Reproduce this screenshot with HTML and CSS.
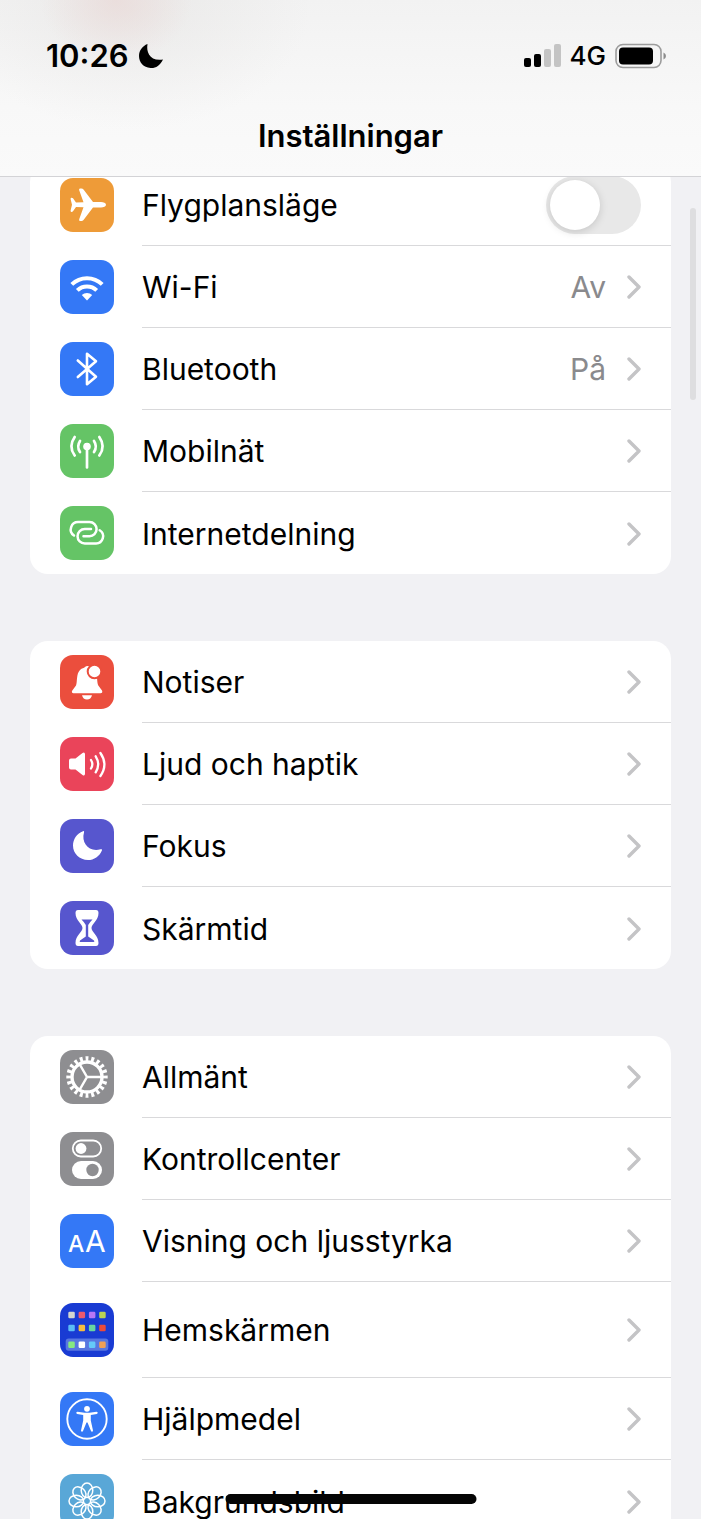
FILE: index.html
```
<!DOCTYPE html>
<html lang="sv">
<head>
<meta charset="utf-8">
<meta name="viewport" content="width=device-width, initial-scale=1">
<title>Inställningar</title>
<link rel="stylesheet" href="styles.css">
</head>
<body>
<svg class="defs" width="0" height="0" aria-hidden="true">
  <symbol id="chevron" viewBox="0 0 14 24"><path d="M2 2l10 10L2 22" fill="none" stroke="currentColor" stroke-width="3.400" stroke-linecap="round" stroke-linejoin="round"/></symbol>
</svg>
<div class="screen">
  <header class="header">
    <div class="status">
      <div class="status-side">
        <span class="time">10:26</span>
        <svg class="status-moon" viewBox="0 0 26 26" aria-hidden="true"><path d="M9.500 1C8 9.500 12 18.500 25 16.500C22 23 17 25.500 12.500 25C5.500 24.500 1 19.500 1 13C1 7.500 4.500 3 9.500 1Z"/></svg>
      </div>
      <div class="status-side">
        <svg class="signal" viewBox="0 0 37 24" aria-hidden="true"><rect y="14" width="7" height="9" rx="2"/><rect x="10" y="10" width="7" height="13" rx="2"/><g fill="#c4c4c4"><rect x="20" y="5" width="7" height="18" rx="2"/><rect x="30" width="7" height="23" rx="2"/></g></svg>
        <span class="network">4G</span>
        <svg class="battery" viewBox="0 0 52 26" aria-hidden="true"><rect x="1" y="1.500" width="45" height="23" rx="7" fill="none" stroke="#9c9c9c" stroke-width="1.600"/><rect x="4" y="4.500" width="34" height="17" rx="4"/><path d="M48.500 9.500q2.500 1 2.500 3.500t-2.500 3.500z" fill="#8c8c8c"/></svg>
      </div>
    </div>
    <h1 class="title">Inställningar</h1>
  </header>

  <main class="content">
    <ul class="group">
      <li class="row">
        <svg class="icon orange" viewBox="0 0 54 54" aria-hidden="true"><path fill="#fff" d="M46 26.800C46 25 43.500 24 41 24H33L23.500 11.500Q22.700 10.500 21.500 10.500H20Q18.700 10.800 19.200 12.300L23.500 24.200L16 24.500L13 20.300Q12.300 19.500 11.300 19.700Q10.500 19.900 10.600 21L12 26.800L10.600 32.500Q10.500 33.600 11.300 33.900Q12.300 34 13 33.200L16 29L23.500 29.300L19.200 41.200Q18.700 42.800 20 43H21.500Q22.700 43 23.500 42L33 29.500H41C43.500 29.500 46 28.500 46 26.800Z"/></svg>
        <label class="row-body"><span class="label">Flygplansläge</span><input class="toggle" type="checkbox" role="switch"></label>
      </li>
      <li class="row">
        <svg class="icon blue" viewBox="0 0 54 54" aria-hidden="true"><g fill="none" stroke="#fff" stroke-width="4"><path d="M11.800 24.400a21.800 21.800 0 0 1 30.400 0M17.300 30.400a14 14 0 0 1 19.400 0"/></g><path fill="#fff" d="M21.800 35a7.600 7.600 0 0 1 10.400 0L27 40.400z"/></svg>
        <a class="row-body" href="#wifi"><span class="label">Wi-Fi</span><span class="value">Av</span><svg class="chevron" aria-hidden="true"><use href="#chevron"/></svg></a>
      </li>
      <li class="row">
        <svg class="icon blue" viewBox="0 0 54 54" aria-hidden="true"><path d="M17.800 18.500L36 34.700L27 42.200V11.800L36 19.200L17.800 35" fill="none" stroke="#fff" stroke-width="2.600" stroke-linecap="round" stroke-linejoin="round"/></svg>
        <a class="row-body" href="#bluetooth"><span class="label">Bluetooth</span><span class="value">På</span><svg class="chevron" aria-hidden="true"><use href="#chevron"/></svg></a>
      </li>
      <li class="row">
        <svg class="icon green" viewBox="0 0 54 54" aria-hidden="true"><circle cx="27" cy="22.500" r="3.800" fill="#fff"/><path d="M27 23V43.500M20 17q-3.600 5.500 0 11M34 17q3.600 5.500 0 11M14.700 13q-6.700 9.500 0 18.500M39.300 13q6.700 9.500 0 18.500" fill="none" stroke="#fff" stroke-width="2.700" stroke-linecap="round"/></svg>
        <a class="row-body" href="#mobilnat"><span class="label">Mobilnät</span><svg class="chevron" aria-hidden="true"><use href="#chevron"/></svg></a>
      </li>
      <li class="row">
        <svg class="icon green" viewBox="0 0 54 54" aria-hidden="true"><path d="M14 29.500A7.400 7.400 0 0 1 18.500 16H29.500A7.100 7.100 0 0 1 29.500 30.200H23.500M31 23H24.800A7.200 7.200 0 0 0 24.800 37.500H35.500A7.200 7.200 0 0 0 39.700 24.200" fill="none" stroke="#fff" stroke-width="2.500" stroke-linecap="round"/></svg>
        <a class="row-body" href="#internetdelning"><span class="label">Internetdelning</span><svg class="chevron" aria-hidden="true"><use href="#chevron"/></svg></a>
      </li>
    </ul>

    <ul class="group">
      <li class="row">
        <svg class="icon red" viewBox="0 0 54 54" aria-hidden="true"><path fill="#fff" d="M13.500 38.300Q11 37.800 12.300 35.500L16 30.500C17.500 27 16 19 20 15C22 13 24 13.300 25 12Q26.500 10.500 29 11.200L36 17C37.500 20 36.800 28 38.300 30.500L42 35.500Q43 38 40.500 38.300ZM22 40.300H32Q31 44.500 27 44.500T22 40.300Z"/><circle cx="34.500" cy="16.500" r="6.800" fill="#fff" stroke="#eb4e3d" stroke-width="2"/></svg>
        <a class="row-body" href="#notiser"><span class="label">Notiser</span><svg class="chevron" aria-hidden="true"><use href="#chevron"/></svg></a>
      </li>
      <li class="row">
        <svg class="icon pink" viewBox="0 0 54 54" aria-hidden="true"><path fill="#fff" d="M11 21.500H15.500L22.500 16Q25 14.600 25 17.500V36.500Q25 39.500 22.500 38L15.500 32.500H11Q9 32.500 9 30.500V23.500Q9 21.500 11 21.500Z"/><path d="M31 23q2.700 4.200 0 8.500M35.700 19.300q5 8 0 16M40.400 16q8 11.500 0 23" fill="none" stroke="#fff" stroke-width="2.300" stroke-linecap="round"/></svg>
        <a class="row-body" href="#ljud"><span class="label">Ljud och haptik</span><svg class="chevron" aria-hidden="true"><use href="#chevron"/></svg></a>
      </li>
      <li class="row">
        <svg class="icon purple" viewBox="0 0 54 54" aria-hidden="true"><path fill="#fff" d="M23 12.200Q24.500 11.800 24 13.500C21 24 29 33.500 40.500 30.300Q42.500 29.800 42 31.200C39.500 37.500 34 41 28 41C19.500 41 13 34.500 13 26.500C13 20 17 14.500 23 12.200Z"/></svg>
        <a class="row-body" href="#fokus"><span class="label">Fokus</span><svg class="chevron" aria-hidden="true"><use href="#chevron"/></svg></a>
      </li>
      <li class="row">
        <svg class="icon purple" viewBox="0 0 54 54" aria-hidden="true"><path fill="#fff" d="M18 9H36Q38.500 9 38.500 12C38.500 20 31.500 22.500 31.500 27S38.500 34 38.500 42Q38.500 45 36 45H18Q15.500 45 15.500 42C15.500 34 22.500 31.500 22.500 27S15.500 20 15.500 12Q15.500 9 18 9Z"/><path fill="#5756ce" d="M21.500 18.500H32.500Q29.500 21.500 28.200 24V35.500L34 39.500Q35 41 33.500 41H20.500Q19 41 20 39.500L25.800 35.500V24Q24.500 21.500 21.500 18.500Z"/></svg>
        <a class="row-body" href="#skarmtid"><span class="label">Skärmtid</span><svg class="chevron" aria-hidden="true"><use href="#chevron"/></svg></a>
      </li>
    </ul>

    <ul class="group">
      <li class="row">
        <svg class="icon gray" viewBox="0 0 54 54" aria-hidden="true"><g fill="none" stroke="#fff"><circle cx="27" cy="27" r="15" stroke-width="3.400"/><circle cx="27" cy="27" r="18.200" stroke-width="5" pathLength="200" stroke-dasharray="5 5" stroke-dashoffset="2.500"/><path d="M27 27H42M27 27L19.500 14M27 27L19.500 40" stroke-width="2.500"/></g></svg>
        <a class="row-body" href="#allmant"><span class="label">Allmänt</span><svg class="chevron" aria-hidden="true"><use href="#chevron"/></svg></a>
      </li>
      <li class="row">
        <svg class="icon gray" viewBox="0 0 54 54" aria-hidden="true"><rect x="12.800" y="8.500" width="28.400" height="16" rx="8" fill="none" stroke="#fff" stroke-width="1.800"/><circle cx="21" cy="16.500" r="5.400" fill="#fff"/><rect x="12" y="29" width="30" height="18" rx="9" fill="#fff"/><circle cx="32.500" cy="38" r="6.200" fill="#8e8e91"/></svg>
        <a class="row-body" href="#kontrollcenter"><span class="label">Kontrollcenter</span><svg class="chevron" aria-hidden="true"><use href="#chevron"/></svg></a>
      </li>
      <li class="row">
        <svg class="icon blue" viewBox="0 0 54 54" aria-hidden="true"><text class="icon-a-small" x="8" y="38">A</text><text class="icon-a-large" x="25" y="38">A</text></svg>
        <a class="row-body" href="#visning"><span class="label">Visning och ljusstyrka</span><svg class="chevron" aria-hidden="true"><use href="#chevron"/></svg></a>
      </li>
      <li class="row row-tall">
        <svg class="icon navy" viewBox="0 0 54 54" aria-hidden="true"><rect x="5.700" y="35.500" width="42.600" height="12.300" rx="3" fill="#5877e0"/><g><rect x="8.300" y="8.700" width="6.500" height="6.500" rx="1.300" fill="#d4d6cf"/><rect x="18.600" y="8.700" width="6.500" height="6.500" rx="1.300" fill="#ef5a6d"/><rect x="28.900" y="8.700" width="6.500" height="6.500" rx="1.300" fill="#b877f5"/><rect x="39.200" y="8.700" width="6.500" height="6.500" rx="1.300" fill="#b9d255"/><rect x="8.300" y="21.700" width="6.500" height="6.500" rx="1.300" fill="#5bbcf5"/><rect x="18.600" y="21.700" width="6.500" height="6.500" rx="1.300" fill="#f5bd41"/><rect x="28.900" y="21.700" width="6.500" height="6.500" rx="1.300" fill="#68d5a0"/><rect x="39.200" y="21.700" width="6.500" height="6.500" rx="1.300" fill="#eb4b3a"/><rect x="8.300" y="38.500" width="6.500" height="6.500" rx="1.300" fill="#86ea80"/><rect x="18.600" y="38.500" width="6.500" height="6.500" rx="1.300" fill="#fff"/><rect x="28.900" y="38.500" width="6.500" height="6.500" rx="1.300" fill="#65caf9"/><rect x="39.200" y="38.500" width="6.500" height="6.500" rx="1.300" fill="#f0a056"/></g></svg>
        <a class="row-body" href="#hemskarmen"><span class="label">Hemskärmen</span><svg class="chevron" aria-hidden="true"><use href="#chevron"/></svg></a>
      </li>
      <li class="row">
        <svg class="icon blue" viewBox="0 0 54 54" aria-hidden="true"><circle cx="27" cy="27" r="19.700" fill="none" stroke="#fff" stroke-width="1.900"/><circle cx="27" cy="16.800" r="2.900" fill="#fff"/><path fill="#fff" d="M17.500 19.700L24.500 20.800H29.500L36.500 19.700Q37.700 19.700 37.700 20.800T36.800 22L30.800 23V28.500L33 38.500Q33 39.600 32.200 39.800T31 39.100L27.500 30.500H26.500L23 39.100Q22.500 40 21.800 39.800T21 38.500L23.200 28.500V23L17.200 22Q16.300 21.800 16.300 20.800T17.500 19.700Z"/></svg>
        <a class="row-body" href="#hjalpmedel"><span class="label">Hjälpmedel</span><svg class="chevron" aria-hidden="true"><use href="#chevron"/></svg></a>
      </li>
      <li class="row">
        <svg class="icon sky" viewBox="0 0 54 54" aria-hidden="true"><g fill="none" stroke="#fff" stroke-width="1.500"><ellipse cx="27" cy="16.300" rx="5.800" ry="7.300"/><ellipse cx="27" cy="16.300" rx="5.800" ry="7.300" transform="rotate(45 27 27)"/><ellipse cx="27" cy="16.300" rx="5.800" ry="7.300" transform="rotate(90 27 27)"/><ellipse cx="27" cy="16.300" rx="5.800" ry="7.300" transform="rotate(135 27 27)"/><ellipse cx="27" cy="16.300" rx="5.800" ry="7.300" transform="rotate(180 27 27)"/><ellipse cx="27" cy="16.300" rx="5.800" ry="7.300" transform="rotate(225 27 27)"/><ellipse cx="27" cy="16.300" rx="5.800" ry="7.300" transform="rotate(270 27 27)"/><ellipse cx="27" cy="16.300" rx="5.800" ry="7.300" transform="rotate(315 27 27)"/></g></svg>
        <a class="row-body" href="#bakgrundsbild"><span class="label">Bakgrundsbild</span><svg class="chevron" aria-hidden="true"><use href="#chevron"/></svg></a>
      </li>
    </ul>
  </main>
  <div class="scrollbar"></div>
  <div class="home-indicator"></div>
</div>
</body>
</html>
```
FILE: styles.css
```
* {
  box-sizing: border-box;
}

body {
  margin: 0;
  background: #f1f1f4;
  color: #000;
  font-family: Inter, "Liberation Sans", sans-serif;
}

.defs {
  position: absolute;
}

.screen {
  position: relative;
  height: 100vh;
  overflow: hidden;
}

.header {
  position: relative;
  z-index: 2;
  padding: 36px 34px 20px 46px;
  border-bottom: 1px solid #d3d3d6;
  background:
    radial-gradient(ellipse 76px 62px at 116px 0, rgba(234, 214, 212, 0.6), transparent),
    radial-gradient(ellipse 180px 120px at 130px 10px, rgba(222, 220, 218, 0.4), transparent),
    linear-gradient(#f2f2f2, #f8f8f8 60%, #fafafa);
}

.status {
  display: flex;
  justify-content: space-between;
  align-items: center;
  height: 40px;
}

.status-side {
  display: flex;
  align-items: center;
  gap: 9px;
}

.time {
  font-size: 31px;
  line-height: 40px;
  font-weight: 600;
}

.status-moon {
  width: 26px;
  height: 26px;
}

.signal {
  width: 37px;
  height: 24px;
}

.network {
  font-size: 26px;
  line-height: 40px;
  font-weight: 500;
}

.battery {
  width: 52px;
  height: 26px;
}

.title {
  margin: 40px 0 0;
  padding-right: 12px;
  text-align: center;
  font-size: 31px;
  line-height: 40px;
  font-weight: 600;
}

.content {
  display: flex;
  flex-direction: column;
  gap: 67px;
  margin-top: -13px;
  padding: 0 30px;
}

.group {
  margin: 0;
  padding: 0;
  list-style: none;
  border-radius: 18px;
  background: #fff;
  overflow: hidden;
}

.row {
  display: flex;
  align-items: center;
  gap: 28px;
  min-height: 82px;
  padding-left: 30px;
}

.row-tall {
  min-height: 96px;
}

.icon {
  flex: none;
  width: 54px;
  height: 54px;
  border-radius: 13px;
}

.orange { background: #ee9b38; }
.blue { background: #3478f6; }
.green { background: #65c466; }
.red { background: #eb4e3d; }
.pink { background: #ea445a; }
.purple { background: #5756ce; }
.gray { background: #8e8e91; }
.navy { background: #193bd3; }
.sky { background: #59a7d7; }

.icon-a-small,
.icon-a-large {
  fill: #fff;
  font-size: 23px;
  font-weight: 500;
}

.icon-a-large {
  font-size: 30px;
  font-weight: 400;
}

.row-body {
  display: flex;
  flex: 1;
  align-self: stretch;
  align-items: center;
  min-width: 0;
  padding-top: 1px;
  padding-right: 30px;
  border-bottom: 1px solid #d9d9db;
  color: inherit;
  text-decoration: none;
}

.row:last-child .row-body {
  border-bottom: 0;
}

.label {
  flex: 1;
  font-size: 30px;
  line-height: 40px;
}

.value {
  margin-right: 21px;
  color: #8a8a8d;
  font-size: 30px;
  line-height: 40px;
}

.chevron {
  width: 14px;
  height: 24px;
  color: #c4c4c6;
}

.toggle {
  appearance: none;
  display: flex;
  align-items: center;
  width: 95px;
  height: 58px;
  margin: 0;
  padding: 4px;
  border-radius: 29px;
  background: #e8e8e8;
}

.toggle::before {
  content: "";
  width: 50px;
  height: 50px;
  border-radius: 50%;
  background: #fff;
  box-shadow: 0 2px 8px rgba(0, 0, 0, 0.15);
}

.toggle:checked {
  justify-content: flex-end;
  background: #65c466;
}

.scrollbar {
  position: absolute;
  z-index: 1;
  top: 208px;
  right: 5px;
  width: 6px;
  height: 192px;
  border-radius: 3px;
  background: #dedee0;
}

.home-indicator {
  position: absolute;
  z-index: 3;
  bottom: 15px;
  left: 50%;
  width: 251px;
  height: 10px;
  border-radius: 5px;
  background: #050505;
  transform: translateX(-50%);
}
```
